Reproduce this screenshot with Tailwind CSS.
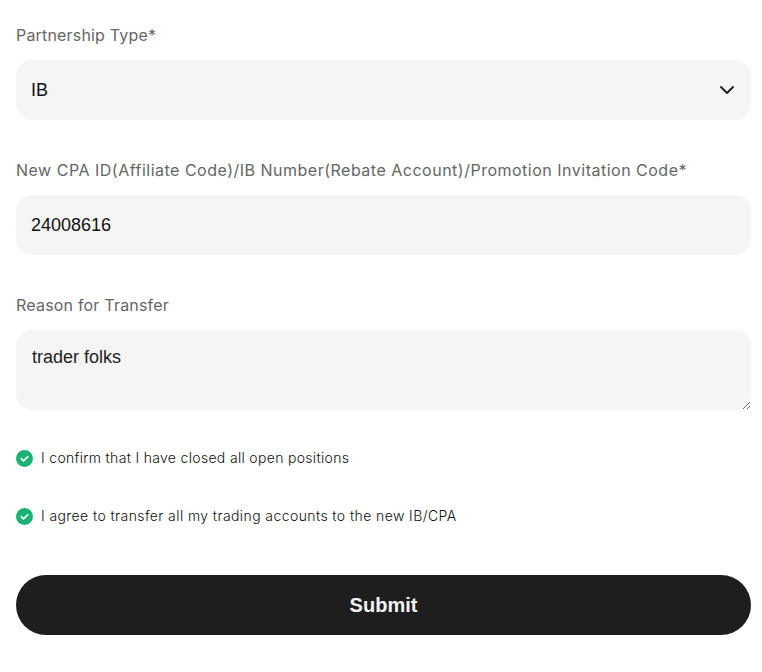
<!DOCTYPE html>
<html lang="en">

<head>
    <meta charset="UTF-8">
    <meta name="viewport" content="width=device-width, initial-scale=1.0">
    <title>Transfer Request</title>
    <script src="https://cdn.jsdelivr.net/npm/@tailwindcss/browser@4"></script>
</head>

<body class="bg-white min-h-screen font-['Inter',sans-serif]">
    <form class="pl-4 pr-[11px] pt-[23px] pb-[37px]">
        <label class="block h-6 leading-6 text-[#666666] text-[16px] tracking-[0.18px]">Partnership Type*</label>
        <div class="relative mt-[13px]">
            <select class="w-full h-[60px] rounded-2xl bg-[#f5f5f5] pl-[15px] pr-10 appearance-none text-lg text-[#111111] font-['Liberation_Sans',sans-serif] outline-none">
                <option>IB</option>
            </select>
            <svg class="absolute right-4 top-[22px] w-[16px] h-[16px]" viewBox="0 0 16 16" fill="none" stroke="#222222" stroke-width="2" stroke-linecap="round" stroke-linejoin="round">
                <path d="M2 5l6 6 6-6" />
            </svg>
        </div>

        <label class="block h-6 leading-6 mt-[38px] text-[#666666] text-[16px] tracking-[0.5px]">New CPA ID(Affiliate Code)/IB Number(Rebate Account)/Promotion Invitation Code*</label>
        <input type="text" value="24008616" class="block w-full h-[60px] mt-[13px] rounded-2xl bg-[#f5f5f5] px-[15px] text-lg text-[#111111] font-['Liberation_Sans',sans-serif] outline-none">

        <label class="block h-6 leading-6 mt-[38px] text-[#666666] text-[16px] tracking-[0.2px]">Reason for Transfer</label>
        <textarea class="block w-full h-20 mt-[13px] rounded-2xl bg-[#f5f5f5] px-4 py-[15px] text-lg leading-[24px] text-[#222222] font-['Liberation_Sans',sans-serif] outline-none">trader folks</textarea>

        <div class="flex items-center gap-2 mt-[38px] h-[20px] text-[14px] text-[#111111] font-light">
            <svg class="w-[17px] h-[17px] shrink-0 mt-px" viewBox="0 0 17 17">
                <circle cx="8.5" cy="8.5" r="8.5" fill="#1bb273" />
                <path d="M5.3 8.7l2.2 2.1 4.2-4" fill="none" stroke="#ffffff" stroke-width="1.6" stroke-linecap="round" stroke-linejoin="round" />
            </svg>
            <span class="-mt-[2px] tracking-[0.32px]">I confirm that I have closed all open positions</span>
        </div>
        <div class="flex items-center gap-2 mt-[38px] h-[20px] text-[14px] text-[#111111] font-light">
            <svg class="w-[17px] h-[17px] shrink-0 mt-px" viewBox="0 0 17 17">
                <circle cx="8.5" cy="8.5" r="8.5" fill="#1bb273" />
                <path d="M5.3 8.7l2.2 2.1 4.2-4" fill="none" stroke="#ffffff" stroke-width="1.6" stroke-linecap="round" stroke-linejoin="round" />
            </svg>
            <span class="-mt-[2px] tracking-[0.41px]">I agree to transfer all my trading accounts to the new IB/CPA</span>
        </div>

        <button type="submit" class="block w-full h-[60px] mt-[49px] rounded-[30px] bg-[#1e1e1e] text-[#f5f5f5] text-xl font-bold font-['Liberation_Sans',sans-serif]">Submit</button>
    </form>
</body>

</html>
